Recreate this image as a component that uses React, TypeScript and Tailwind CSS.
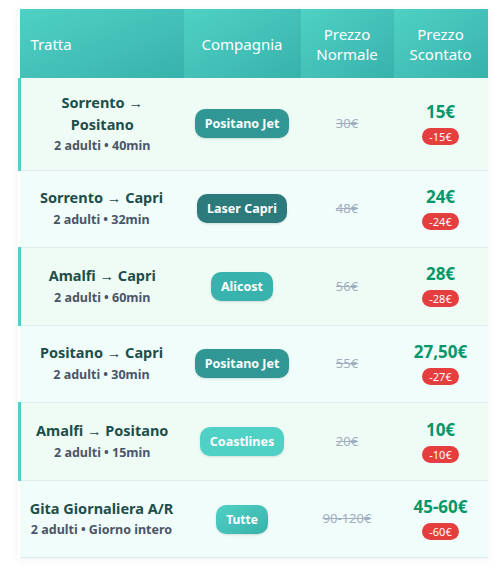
import React from "react";

type Route = {
  name: string;
  info: string;
  company: string;
  pill: string;
  normal: string;
  price: string;
  saving: string;
  accent: boolean;
  bg: string;
};

const routes: Route[] = [
  { name: "Sorrento → Positano", info: "2 adulti • 40min", company: "Positano Jet", pill: "bg-[#319795]", normal: "30€", price: "15€", saving: "-15€", accent: true, bg: "bg-[#effcf5]" },
  { name: "Sorrento → Capri", info: "2 adulti • 32min", company: "Laser Capri", pill: "bg-[#2c7a7b]", normal: "48€", price: "24€", saving: "-24€", accent: false, bg: "bg-[#f0fdfa]" },
  { name: "Amalfi → Capri", info: "2 adulti • 60min", company: "Alicost", pill: "bg-[#38b2ac]", normal: "56€", price: "28€", saving: "-28€", accent: true, bg: "bg-[#effcf5]" },
  { name: "Positano → Capri", info: "2 adulti • 30min", company: "Positano Jet", pill: "bg-[#319795]", normal: "55€", price: "27,50€", saving: "-27€", accent: false, bg: "bg-[#f0fdfa]" },
  { name: "Amalfi → Positano", info: "2 adulti • 15min", company: "Coastlines", pill: "bg-[#4fd1c5]", normal: "20€", price: "10€", saving: "-10€", accent: true, bg: "bg-[#effcf5]" },
  { name: "Gita Giornaliera A/R", info: "2 adulti • Giorno intero", company: "Tutte", pill: "bg-gradient-to-br from-[#4fd1c5] to-[#38b2ac] text-[12px]", normal: "90-120€", price: "45-60€", saving: "-60€", accent: false, bg: "bg-[#f0fdfa]" },
];

const headCell = "bg-gradient-to-br from-[#4fd1c5] to-[#38b2ac] text-white font-normal text-[15px] leading-[20px]";

function RouteName({ name }: { name: string }) {
  const parts = name.split(" → ");
  if (parts.length < 2) return <>{name}</>;
  return (
    <>
      {parts[0]} <span className="font-['Liberation_Sans',sans-serif] font-normal">→</span> {parts[1]}
    </>
  );
}

export default function App() {
  return (
    <div className="bg-white min-h-[578px] pt-[9px] px-[18px] font-['Noto_Sans','Open_Sans',sans-serif]">
      <table className="w-[468px] table-fixed border-collapse shadow-[0_2px_8px_rgba(0,0,0,0.06)]">
        <colgroup>
          <col className="w-[164px]" />
          <col className="w-[117px]" />
          <col className="w-[93px]" />
          <col className="w-[94px]" />
        </colgroup>
        <thead>
          <tr className="h-[69px]">
            <th className={`${headCell} text-left pl-[11px]`}>Tratta</th>
            <th className={`${headCell} text-center`}>Compagnia</th>
            <th className={`${headCell} text-center`}>Prezzo<br />Normale</th>
            <th className={`${headCell} text-center`}>Prezzo<br />Scontato</th>
          </tr>
        </thead>
        <tbody>
          {routes.map((r, i) => (
            <tr key={r.name} className={`${r.bg} border-b border-[#e2ecef] ${i === 0 ? "h-[92px]" : "h-[77.6px]"}`}>
              <td className={`px-[10px] text-center ${r.accent ? "border-l-[3px] border-l-[#4fd1c5]" : ""}`}>
                <div className="text-[14.5px] font-bold text-[#1d4e4b] leading-[21px]">
                  <RouteName name={r.name} />
                </div>
                <div className="text-[12.5px] font-bold text-[#4a5568] leading-[20px] mt-[1px]">{r.info}</div>
              </td>
              <td className="text-center">
                <span className={`${r.pill} inline-block rounded-[10px] px-[10px] py-[5px] text-white font-bold text-[12.5px] leading-[19px] shadow-sm`}>
                  {r.company}
                </span>
              </td>
              <td className="text-center text-[13px] text-[#a0aec0] line-through">{r.normal}</td>
              <td className="text-center">
                <div className="text-[17px] font-bold text-[#059669] leading-[22px]">{r.price}</div>
                <div className="inline-block mt-[3px] bg-[#e53e3e] text-white text-[11px] leading-[17px] rounded-full px-[7px]">{r.saving}</div>
              </td>
            </tr>
          ))}
        </tbody>
      </table>
    </div>
  );
}
